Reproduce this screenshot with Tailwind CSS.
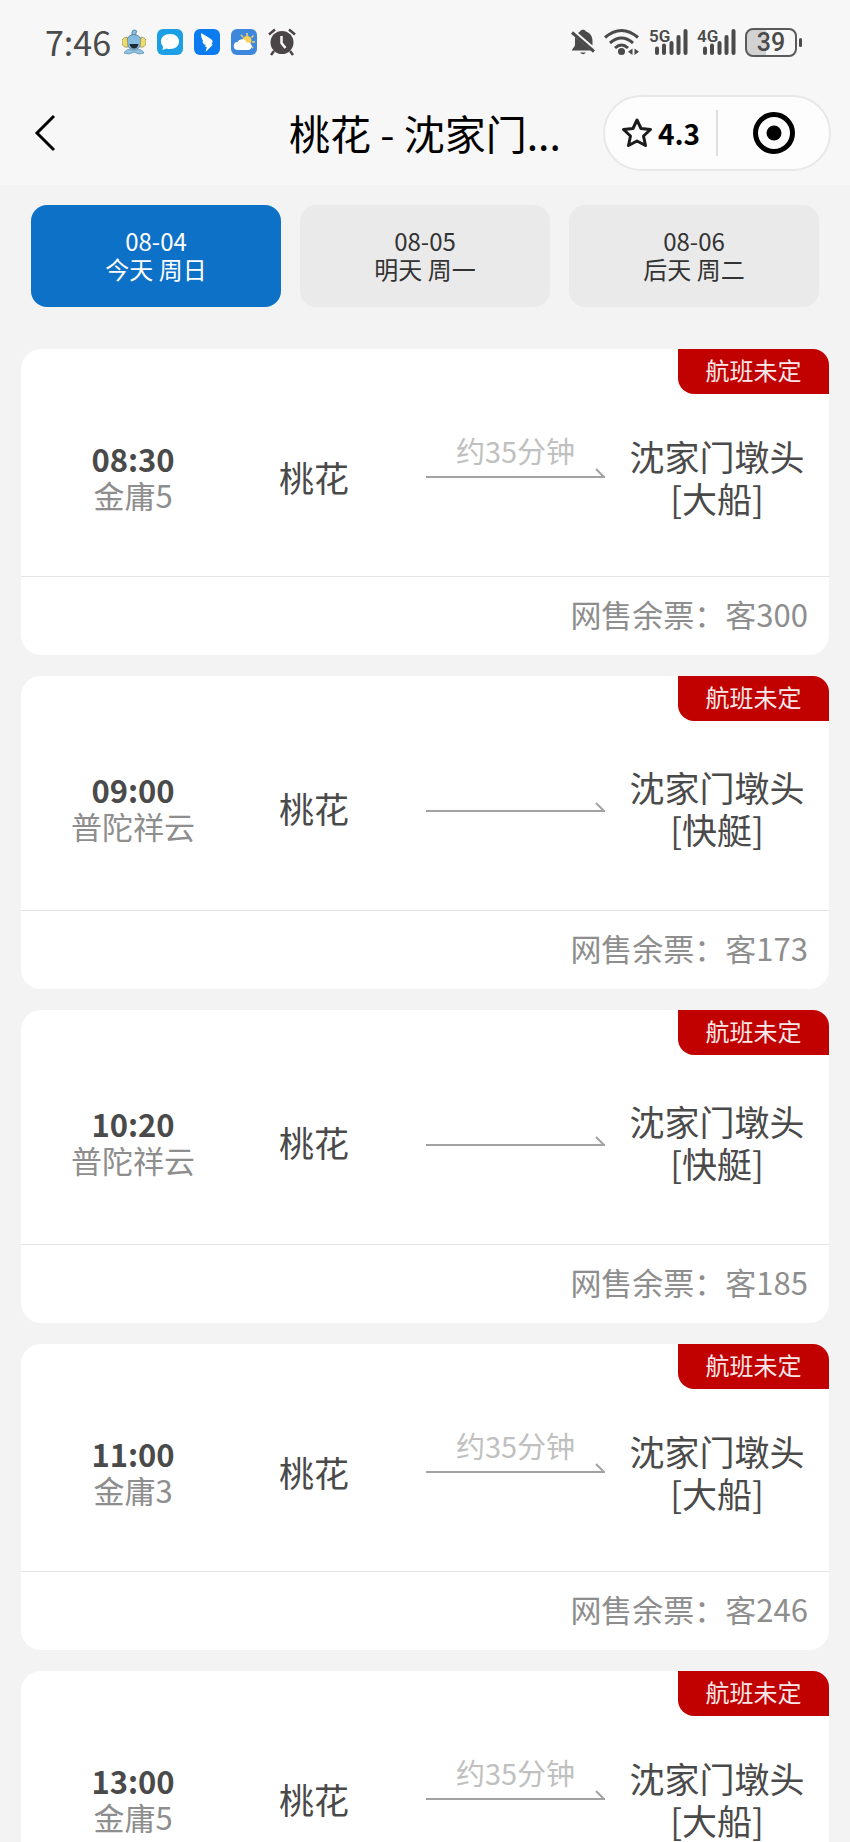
<!DOCTYPE html>
<html lang="zh-CN">
<head>
    <meta charset="UTF-8">
    <meta name="viewport" content="width=device-width, initial-scale=1.0">
    <title>桃花 - 沈家门</title>
    <script src="https://cdn.jsdelivr.net/npm/@tailwindcss/browser@4"></script>
</head>
<body class="flex h-screen flex-col overflow-hidden bg-[#f3f3f3] font-['Noto_Sans_CJK_SC',sans-serif] text-[#4a4a4a]">

    <header class="bg-[#f7f7f7]">
        <!-- Status bar -->
        <div class="flex h-[84px] items-center justify-between pr-[48px] pl-[45px]">
            <div class="flex items-center gap-[11px]">
                <span class="text-[34px] leading-[40px]">7:46</span>
                <svg class="h-[26px] w-[24px]" viewBox="0 0 24 26">
                    <path d="M10 7V3q0-2 3-2 3 1 1 3l-1 3" fill="#8fc3e6" stroke="#5d86a5"/>
                    <circle cx="12" cy="13" r="7.500" fill="#84bce0" stroke="#5d86a5"/>
                    <path d="M5 8q-6 1-5 6 1 5 6 4zM19 8q6 1 5 6-1 5-6 4z" fill="#f0dc6e" stroke="#8d8a55" stroke-width=".7"/>
                    <path d="M7.500 15h9q-1 4.500-4.500 4.500T7.500 15z" fill="#1d2833"/>
                    <path d="M2 24q3-5 8-3h4q5-2 8 3l-5 1-5-2-5 2z" fill="#8fc3e6" stroke="#6f9cba"/>
                </svg>
                <svg class="h-[26px] w-[26px]" viewBox="0 0 26 26">
                    <rect width="26" height="26" rx="6" fill="#1c9fe4"/>
                    <path d="M13 5c5.500 0 9 3 9 7.500S18.500 20 13 20c-1.300 0-2.500-.2-3.600-.6L5.500 21l.6-3.600C4.700 16 4 14.500 4 12.500 4 8 7.500 5 13 5z" fill="#fff"/>
                </svg>
                <svg class="h-[26px] w-[26px]" viewBox="0 0 26 26">
                    <rect width="26" height="26" rx="6" fill="#0a7cf0"/>
                    <path d="M7 4c3 2 8 4 11 7 1.500 1.500 0 3-.7 4.500H19L11.500 23l1.300-5-2-.5 1-1.500C9 15 8.500 13.500 8.500 12l1 .2C7.500 10 7 7 7 4z" fill="#fff"/>
                </svg>
                <svg class="h-[26px] w-[26px]" viewBox="0 0 26 26">
                    <rect width="26" height="26" rx="6" fill="#3d87dc"/>
                    <path d="M16 4v3M22.500 6.500l-2 2M24 13h-3M10 6l2 2M22 19l-2-2" stroke="#f2d36a" stroke-width="1.500"/>
                    <circle cx="16" cy="11.500" r="4.500" fill="#f8d255"/>
                    <path d="M7 21a4 4 0 0 1-.5-8 5 5 0 0 1 9.300.8A3.700 3.700 0 1 1 17 21z" fill="#fff"/>
                </svg>
                <svg class="h-[28px] w-[28px]" viewBox="0 0 28 28">
                    <path d="M1 6.500 7 1.500M27 6.500l-6-5M6 23l-3 4M22 23l3 4" stroke="#4b4548" stroke-width="2.500"/>
                    <circle cx="14" cy="14.500" r="11.500" fill="#4b4548"/>
                    <path d="M13.500 8v7l4 5" fill="none" stroke="#f7f7f7" stroke-width="2.500"/>
                </svg>
            </div>
            <div class="flex items-center gap-[9px]">
                <svg class="h-[28px] w-[24px]" viewBox="0 0 24 28">
                    <path d="M9 3.500C10 1 14 1 15 3.500c4.500 1.500 6.500 5 6.500 9.500v4.500L7 5zM4 9l16 13.500H1c0-2 3-3 3-6.500z" fill="#4a4a4a"/>
                    <path d="M1 4.500l22 19" stroke="#4a4a4a" stroke-width="3"/>
                    <path d="M9 24.500h6q-3 3.500-6 0z" fill="#4a4a4a"/>
                </svg>
                <svg class="h-[28px] w-[36px]" viewBox="0 0 36 28" fill="none" stroke="#4a4a4a" stroke-width="3">
                    <path d="M1 9.500q16.500-14 33 0M6 15q11.500-10 23 0M11 20q6.500-6 13 0"/>
                    <circle cx="17.500" cy="23.500" r="3.500" fill="#4a4a4a" stroke="none"/>
                    <path d="M28.500 20.500v6.500l-4.500-3.200zM30.500 20.500v6.500l4.500-3.200z" fill="#4a4a4a" stroke="none"/>
                </svg>
                <svg class="h-[28px] w-[39px] overflow-visible" viewBox="0 0 39 28">
                    <text x="0" y="14" font-family="Roboto, sans-serif" font-size="17" font-weight="600" fill="#4a4a4a">5G</text>
                    <path d="M8 20.500v4.500M15 17.500v7.500M22.500 15v10M29.500 9v16M36.500 3v22" stroke="#4a4a4a" stroke-width="4" stroke-linecap="round"/>
                </svg>
                <svg class="h-[28px] w-[39px] overflow-visible" viewBox="0 0 39 28">
                    <text x="0" y="14" font-family="Roboto, sans-serif" font-size="17" font-weight="600" fill="#4a4a4a">4G</text>
                    <path d="M8 20.500v4.500M15 17.500v7.500M22.500 15v10M29.500 9v16M36.500 3v22" stroke="#4a4a4a" stroke-width="4" stroke-linecap="round"/>
                </svg>
                <div class="flex items-center gap-[2px]">
                    <div class="flex h-[29px] w-[52px] items-center justify-center rounded-[8px] border-2 border-[#5a5a5a] bg-linear-to-r from-[#d2d2d2] from-40% to-[#f7f7f7] to-40% font-[Roboto] text-[25px] leading-[25px] font-medium">39</div>
                    <div class="h-[9px] w-[3px] rounded-full bg-[#4a4a4a]"></div>
                </div>
            </div>
        </div>

        <!-- Title bar -->
        <div class="grid h-[101px] grid-cols-[1fr_auto_1fr] items-start px-[19px] text-black">
            <button class="flex h-[98px] items-center pl-[15px]" aria-label="返回">
                <svg class="h-[38px] w-[22px]" viewBox="0 0 22 38" fill="none" stroke="#000" stroke-width="3">
                    <path d="M20 2 3 19l17 17"/>
                </svg>
            </button>
            <h1 class="text-[41px] leading-[96px]">桃花 - 沈家门...</h1>
            <div class="mt-[11px] flex h-[76px] w-[228px] items-center justify-self-end rounded-full border-2 border-[#e8e8e8] bg-[#fdfdfd]">
                <button class="flex h-[46px] flex-1 items-center justify-center gap-[5px] border-r-2 border-[#dedede]">
                    <svg class="h-[32px] w-[32px]" viewBox="0 0 32 32" fill="none" stroke="#1c1c1c" stroke-width="3" stroke-linejoin="round">
                        <path d="M16 3l4 8.500 9.500 1-7 6.500 2 9.500L16 24l-8.500 4.500 2-9.500-7-6.500 9.500-1z"/>
                    </svg>
                    <span class="text-[28px] leading-[32px] font-bold">4.3</span>
                </button>
                <button class="flex flex-1 items-center justify-center" aria-label="关闭">
                    <svg class="h-[42px] w-[42px]" viewBox="0 0 42 42">
                        <circle cx="21" cy="21" r="18.500" fill="none" stroke="#000" stroke-width="5"/>
                        <circle cx="21" cy="21" r="7.500"/>
                    </svg>
                </button>
            </div>
        </div>
    </header>

    <main class="flex-1 overflow-hidden">
        <!-- Dates -->
        <nav class="grid grid-cols-3 gap-[19px] px-[31px] pt-[20px] pb-[42px] text-[24px] leading-[28px]">
            <button class="h-[102px] rounded-2xl bg-[#0e71c8] pb-[3px] text-white">08-04<br>今天 周日</button>
            <button class="h-[102px] rounded-2xl bg-[#eaeaea] pb-[3px] text-[#333]">08-05<br>明天 周一</button>
            <button class="h-[102px] rounded-2xl bg-[#eaeaea] pb-[3px] text-[#333]">08-06<br>后天 周二</button>
        </nav>

        <!-- Sailings -->
        <div id="flights" class="flex flex-col gap-[21px] px-[21px]"></div>
    </main>

    <script>
        const flights = [
            { time: '08:30', ship: '金庸5', type: '大船', duration: '约35分钟', left: 300 },
            { time: '09:00', ship: '普陀祥云', type: '快艇', left: 173 },
            { time: '10:20', ship: '普陀祥云', type: '快艇', left: 185 },
            { time: '11:00', ship: '金庸3', type: '大船', duration: '约35分钟', left: 246 },
            { time: '13:00', ship: '金庸5', type: '大船', duration: '约35分钟', left: 300 },
        ];

        document.getElementById('flights').innerHTML = flights.map(f => `
            <article class="relative rounded-[20px] bg-white">
                <span class="absolute top-0 right-0 h-[45px] w-[151px] rounded-tr-2xl rounded-bl-2xl bg-[#c10000] text-center text-[24px] leading-[42px] text-[#fbe9e9]">航班未定</span>
                <div class="grid grid-cols-[224fr_138fr_222fr_224fr] items-center border-b border-[#e4e4e4] pt-[29px] text-center ${f.duration ? 'h-[228px]' : 'h-[235px]'}">
                    <div class="leading-[36px]">
                        <div class="text-[31px] font-bold">${f.time}</div>
                        <div class="text-[31px] text-[#8e8e8e]">${f.ship}</div>
                    </div>
                    <div class="text-[35px] leading-[42px]">桃花</div>
                    <div class="pl-[43px] ${f.duration ? 'pb-[42px]' : ''}">
                        ${f.duration ? `<div class="text-[29px] leading-[36px] text-[#c0c0c0]">${f.duration}</div>` : ''}
                        <svg class="block h-[12px] w-full" viewBox="0 0 179 12" fill="none" stroke="#a2a2a2">
                            <path d="M0 9h179M170 1l8 8" stroke-width="2"/>
                        </svg>
                    </div>
                    <div class="text-[35px] leading-[42px]">沈家门墩头<br>[${f.type}]</div>
                </div>
                <div class="px-[21px] pb-[4px] text-right text-[31px] leading-[74px] text-[#8e8e8e]">网售余票：客${f.left}</div>
            </article>`).join('');
    </script>

</body>
</html>
